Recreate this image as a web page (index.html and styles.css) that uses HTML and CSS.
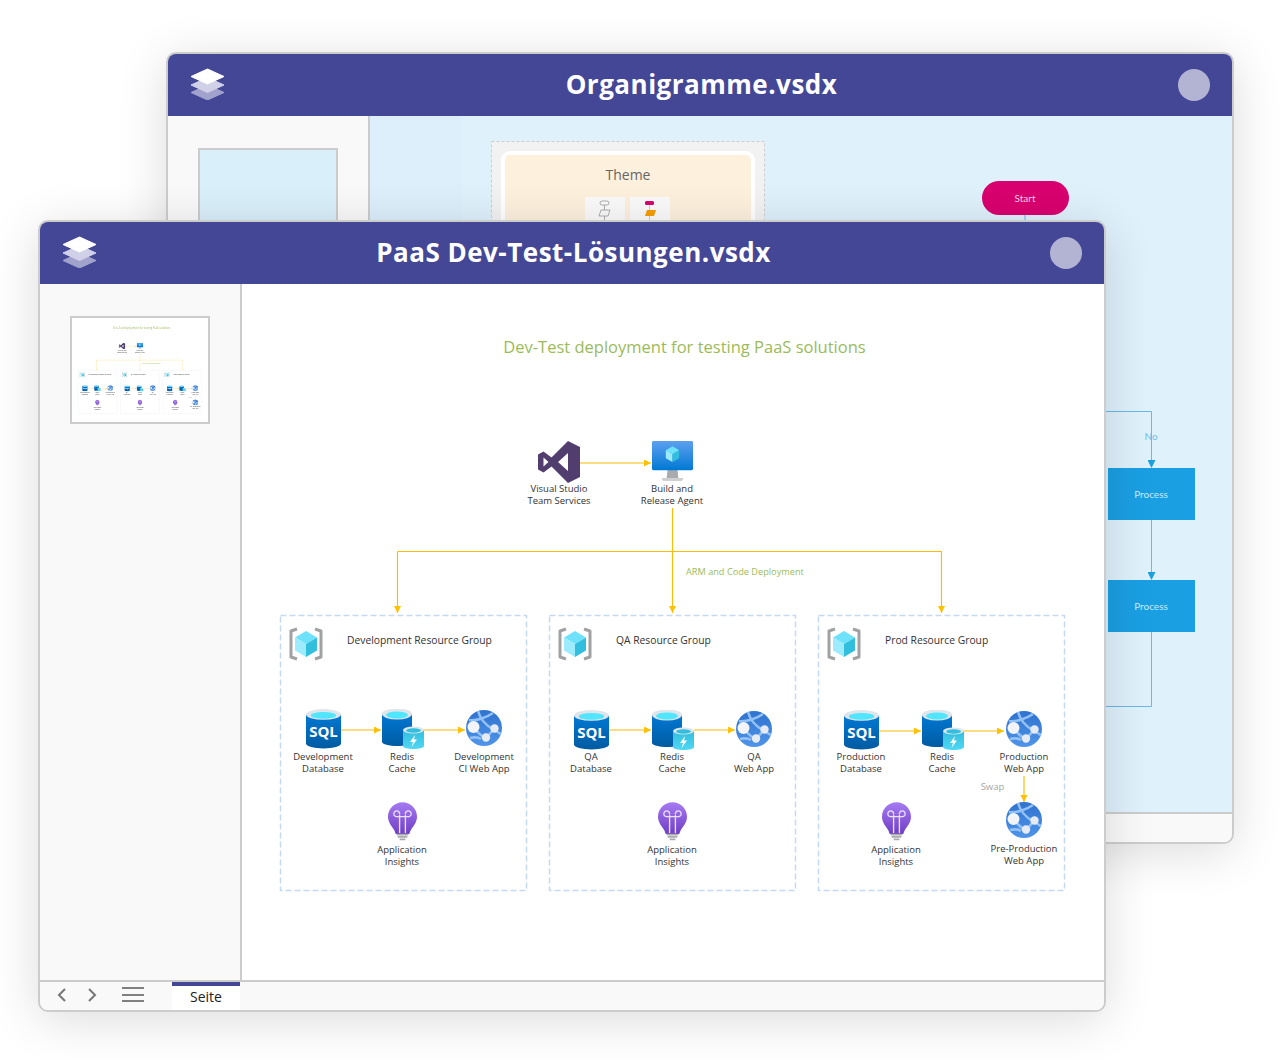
FILE: index.html
```html
<!DOCTYPE html>
<html lang="en">
<head>
    <meta charset="UTF-8">
    <meta name="viewport" content="width=device-width, initial-scale=1.0">
    <link rel="stylesheet" href="styles.css">
    <title>Viewer</title>
</head>
<body>
    <!-- shared icons -->
    <svg class="icon-defs" aria-hidden="true">
        <defs>
            <linearGradient id="gradMonitor" x1="0" y1="0" x2="0" y2="1">
                <stop offset="0" stop-color="#5ea0ef"/>
                <stop offset="1" stop-color="#0078d4"/>
            </linearGradient>
            <linearGradient id="gradDb" x1="0" y1="0" x2="0" y2="1">
                <stop offset="0" stop-color="#0078d4"/>
                <stop offset="1" stop-color="#005ba1"/>
            </linearGradient>
            <linearGradient id="gradCache" x1="0" y1="0" x2="0" y2="1">
                <stop offset="0" stop-color="#32bedd"/>
                <stop offset="1" stop-color="#50d8f5"/>
            </linearGradient>
            <linearGradient id="gradWeb" x1="0" y1="0" x2="0" y2="1">
                <stop offset="0" stop-color="#2f72cf"/>
                <stop offset="1" stop-color="#4f95ea"/>
            </linearGradient>
            <linearGradient id="gradBulb" x1="0" y1="0" x2="0" y2="1">
                <stop offset="0" stop-color="#a67af4"/>
                <stop offset="1" stop-color="#6f3fc4"/>
            </linearGradient>
            <marker id="arrowGold" markerWidth="8" markerHeight="8" refX="7" refY="3.5" orient="auto" markerUnits="userSpaceOnUse">
                <path d="M0 0L7 3.5L0 7Z" fill="#ffc000"/>
            </marker>
            <marker id="arrowBlue" markerWidth="8" markerHeight="8" refX="7" refY="4" orient="auto" markerUnits="userSpaceOnUse">
                <path d="M0 0L8 4L0 8Z" fill="#1a9fe3"/>
            </marker>
        </defs>
        <symbol id="iconLayers" viewBox="0 0 35 32">
            <path d="M17.500 17L34 24.500L17.500 32L1 24.500Z" fill="#a2a3cc" stroke="#a2a3cc" stroke-linejoin="round"/>
            <path d="M17.500 9.500L34 17L17.500 24.500L1 17Z" fill="#d0d1e8" stroke="#d0d1e8" stroke-linejoin="round"/>
            <path d="M17.500 1L34 8.500L17.500 16L1 8.500Z" fill="#fff" stroke="#fff" stroke-linejoin="round"/>
        </symbol>
        <symbol id="iconCube" viewBox="0 0 24 26">
            <path d="M12 0L23 6.500L12 13L1 6.500Z" fill="#6fe2fb"/>
            <path d="M1 6.500L12 13V26L1 19.500Z" fill="#9cebff"/>
            <path d="M23 6.500L12 13V26L23 19.500Z" fill="#32bedd"/>
        </symbol>
        <symbol id="iconVs" viewBox="0 0 42 42">
            <path fill-rule="evenodd" fill="#523e6e" d="M30 0L42 6V36L30 42L13.500 25.500L5.500 31.500L0 28.500V13.500L5.500 10.500L13.500 16.500ZM30 12L20 21L30 30ZM5.500 16.500V25.500L10.500 21Z"/>
        </symbol>
        <symbol id="iconMonitor" viewBox="0 0 42 42">
            <path d="M16 29H26L27 38H15Z" fill="#a9abae"/>
            <path d="M10 38H32C32 40 31 41 30 41H12C11 41 10 40 10 38Z" fill="#cfd0d2"/>
            <rect width="42" height="30" rx="1.500" fill="url(#gradMonitor)"/>
            <use href="#iconCube" x="13.500" y="5" width="15" height="17"/>
        </symbol>
        <symbol id="iconGroup" viewBox="0 0 34 34">
            <path d="M8 2L2 4V30L8 32M26 2L32 4V30L26 32" fill="none" stroke="#a0a1a2" stroke-width="3" stroke-linejoin="round"/>
            <use href="#iconCube" x="5" y="3" width="24" height="28"/>
        </symbol>
        <symbol id="iconDb" viewBox="0 0 36 40">
            <path d="M0 5V35C0 38 8 40 18 40S36 38 36 35V5Z" fill="url(#gradDb)"/>
            <ellipse cx="18" cy="5" rx="18" ry="5.500" fill="#dfe5ea"/>
            <ellipse cx="18" cy="6" rx="13" ry="3.500" fill="#50e6ff"/>
        </symbol>
        <symbol id="iconRedis" viewBox="0 0 42 40">
            <path d="M0 5V33C0 35 7 37 15 37S30 35 30 33V5Z" fill="url(#gradDb)"/>
            <ellipse cx="15" cy="5" rx="15" ry="5.500" fill="#dfe5ea"/>
            <ellipse cx="15" cy="6" rx="11" ry="3.500" fill="#50e6ff"/>
            <path d="M21 21V37C21 39 26 40 31.500 40S42 39 42 37V21Z" fill="url(#gradCache)"/>
            <ellipse cx="31.500" cy="21" rx="10.500" ry="3.500" fill="#dfe5ea"/>
            <ellipse cx="31.500" cy="21.500" rx="7.500" ry="2.200" fill="#32bedd"/>
            <path d="M33 26L28 33H31L29.500 38L35 30.500H32Z" fill="#fff"/>
        </symbol>
        <symbol id="iconWeb" viewBox="0 0 36 36">
            <circle cx="18" cy="18" r="18" fill="url(#gradWeb)"/>
            <path d="M3 10C10 11 20 8 27 3M12 1C14 8 19 15 27 19C30 21 33 23 35 24M8 18C13 24 17 27 20 28M28 19C25 22 23 25 20 28M4 28C8 27 12 27 15 29" fill="none" stroke="#93c1f4" stroke-width="2.600"/>
            <circle cx="7.500" cy="17" r="6" fill="#f2f4f7"/>
            <circle cx="28.500" cy="18.500" r="4.200" fill="#e6ebf2"/>
            <circle cx="20" cy="27.500" r="4.200" fill="#e6ebf2"/>
        </symbol>
        <symbol id="iconBulb" viewBox="0 0 30 40">
            <path d="M15 0C6.700 0 0 6.700 0 15C0 21 4 25 6.500 29C7.500 31 8 33 8 33H22C22 33 22.500 31 23.500 29C26 25 30 21 30 15C30 6.700 23.300 0 15 0Z" fill="url(#gradBulb)"/>
            <path d="M12 32V13M18 32V13M12 12.500A3 3 0 1 0 9.500 15H20.500A3 3 0 1 0 18 12.500" fill="none" stroke="#eadffc" stroke-width="1.400"/>
            <path d="M9 33.500H21M10 36H20M12 38.500H18" stroke="#a9abae" stroke-width="1.800"/>
        </symbol>
    </svg>

    <!-- window in the back -->
    <section class="window window-back">
        <header class="titlebar">
            <svg class="logo"><use href="#iconLayers"/></svg>
            <h1 class="doc-title">Organigramme.vsdx</h1>
            <span class="user-dot"></span>
        </header>
        <div class="window-body">
            <aside class="sidebar">
                <div class="page-thumb page-thumb-blue"></div>
            </aside>
            <div class="canvas canvas-blue">
                <svg class="drawing" viewBox="370 116 862 696">
                    <rect x="491.500" y="141.500" width="273" height="110" fill="#f2f2f2" stroke="#cfcfcf" stroke-dasharray="3 2"/>
                    <rect x="503" y="153" width="250" height="100" rx="7" fill="#fdf0dd" stroke="#fff" stroke-width="4"/>
                    <text class="theme-label" x="628" y="180">Theme</text>
                    <rect x="585" y="197" width="40" height="40" fill="#fafafa"/>
                    <rect x="630" y="197" width="40" height="40" fill="#fafafa"/>
                    <g fill="none" stroke="#9a9a9a" stroke-width=".8">
                        <rect x="600" y="201" width="9" height="4" rx="2"/>
                        <path d="M601 210H610L608 216H599ZM604.500 205V210M604.500 216V222"/>
                    </g>
                    <rect x="645" y="201" width="9" height="4" rx="1.500" fill="#d9006f"/>
                    <path d="M647 210H656L654 216H645Z" fill="#f59c00"/>
                    <path d="M649.500 205V210M649.500 216V222" stroke="#9ccbe6" stroke-width=".8"/>

                    <g fill="none" stroke="#6ab8e6">
                        <path d="M1025 215V240"/>
                        <path d="M1090 411.500H1151.500V467" marker-end="url(#arrowBlue)"/>
                        <path d="M1151.500 520V579" marker-end="url(#arrowBlue)"/>
                        <path d="M1151.500 632V706.500H1090"/>
                    </g>
                    <rect x="982" y="181" width="87" height="34" rx="17" fill="#d9006f"/>
                    <text class="flow-label flow-label-start" x="1025" y="202">Start</text>
                    <rect x="1108" y="468" width="87" height="52" fill="#1a9fe3"/>
                    <text class="flow-label" x="1151" y="497.500">Process</text>
                    <rect x="1108" y="580" width="87" height="52" fill="#1a9fe3"/>
                    <text class="flow-label" x="1151" y="609.500">Process</text>
                    <text class="flow-no" x="1151" y="439.500">No</text>
                </svg>
            </div>
        </div>
        <footer class="footer"></footer>
    </section>

    <!-- window in the front -->
    <section class="window window-front">
        <header class="titlebar">
            <svg class="logo"><use href="#iconLayers"/></svg>
            <h1 class="doc-title">PaaS Dev-Test-Lösungen.vsdx</h1>
            <span class="user-dot"></span>
        </header>
        <div class="window-body">
            <aside class="sidebar">
                <div class="page-thumb">
                    <svg class="thumb-drawing" viewBox="242 284 862 660"><use href="#diagram"/></svg>
                </div>
            </aside>
            <div class="canvas">
                <svg class="drawing" viewBox="242 284 862 696">
                    <g id="diagram">
                        <text class="diagram-title" x="684.500" y="353">Dev-Test deployment for testing PaaS solutions</text>

                        <!-- connectors -->
                        <g class="link">
                            <path d="M580 463H651" marker-end="url(#arrowGold)"/>
                            <path d="M672.500 508V613" marker-end="url(#arrowGold)"/>
                            <path d="M397.500 551.500H941.500V613" marker-end="url(#arrowGold)"/>
                            <path d="M397.500 551.500V613" marker-end="url(#arrowGold)"/>
                            <path d="M341 730H381" marker-end="url(#arrowGold)"/>
                            <path d="M424 730H465" marker-end="url(#arrowGold)"/>
                            <path d="M609 730H651" marker-end="url(#arrowGold)"/>
                            <path d="M694 730H735" marker-end="url(#arrowGold)"/>
                            <path d="M879 731H921" marker-end="url(#arrowGold)"/>
                            <path d="M963 731H1004" marker-end="url(#arrowGold)"/>
                            <path d="M1024 776V802" marker-end="url(#arrowGold)"/>
                        </g>
                        <text class="link-label" x="686" y="574.500">ARM and Code Deployment</text>
                        <text class="swap-label" x="992.500" y="790">Swap</text>

                        <use href="#iconVs" x="538" y="441" width="42" height="42"/>
                        <text class="node-label" x="559" y="492">Visual Studio<tspan x="559" dy="12">Team Services</tspan></text>
                        <use href="#iconMonitor" x="652" y="441" width="41" height="41"/>
                        <text class="node-label" x="672" y="492">Build and<tspan x="672" dy="12">Release Agent</tspan></text>

                        <!-- development group -->
                        <rect class="group-box" x="280.500" y="615.500" width="246" height="275"/>
                        <use href="#iconGroup" x="289" y="627" width="34" height="34"/>
                        <text class="group-label" x="347" y="643.500">Development Resource Group</text>
                        <use href="#iconDb" x="306" y="709" width="35" height="40"/>
                        <text class="sql-label" x="323.500" y="736.500">SQL</text>
                        <text class="node-label" x="323" y="759.500">Development<tspan x="323" dy="12">Database</tspan></text>
                        <use href="#iconRedis" x="382" y="709" width="42" height="40"/>
                        <text class="node-label" x="402" y="759.500">Redis<tspan x="402" dy="12">Cache</tspan></text>
                        <use href="#iconWeb" x="466" y="710" width="36" height="36"/>
                        <text class="node-label" x="484" y="759.500">Development<tspan x="484" dy="12">CI Web App</tspan></text>
                        <use href="#iconBulb" x="388" y="802" width="29" height="39"/>
                        <text class="node-label" x="402" y="852.500">Application<tspan x="402" dy="12.500">Insights</tspan></text>

                        <!-- qa group -->
                        <rect class="group-box" x="549.500" y="615.500" width="246" height="275"/>
                        <use href="#iconGroup" x="558" y="627" width="34" height="34"/>
                        <text class="group-label" x="616" y="643.500">QA Resource Group</text>
                        <use href="#iconDb" x="574" y="710" width="35" height="40"/>
                        <text class="sql-label" x="591.500" y="737.500">SQL</text>
                        <text class="node-label" x="591" y="760">QA<tspan x="591" dy="12">Database</tspan></text>
                        <use href="#iconRedis" x="652" y="710" width="42" height="40"/>
                        <text class="node-label" x="672" y="760">Redis<tspan x="672" dy="12">Cache</tspan></text>
                        <use href="#iconWeb" x="736" y="711" width="36" height="36"/>
                        <text class="node-label" x="754" y="760">QA<tspan x="754" dy="12">Web App</tspan></text>
                        <use href="#iconBulb" x="658" y="802" width="29" height="39"/>
                        <text class="node-label" x="672" y="852.500">Application<tspan x="672" dy="12.500">Insights</tspan></text>

                        <!-- prod group -->
                        <rect class="group-box" x="818.500" y="615.500" width="246" height="275"/>
                        <use href="#iconGroup" x="827" y="627" width="34" height="34"/>
                        <text class="group-label" x="885" y="643.500">Prod Resource Group</text>
                        <use href="#iconDb" x="844" y="710" width="35" height="40"/>
                        <text class="sql-label" x="861.500" y="737.500">SQL</text>
                        <text class="node-label" x="861" y="760">Production<tspan x="861" dy="12">Database</tspan></text>
                        <use href="#iconRedis" x="922" y="710" width="42" height="40"/>
                        <text class="node-label" x="942" y="760">Redis<tspan x="942" dy="12">Cache</tspan></text>
                        <use href="#iconWeb" x="1006" y="711" width="36" height="36"/>
                        <text class="node-label" x="1024" y="760">Production<tspan x="1024" dy="12">Web App</tspan></text>
                        <use href="#iconBulb" x="882" y="802" width="29" height="39"/>
                        <text class="node-label" x="896" y="852.500">Application<tspan x="896" dy="12.500">Insights</tspan></text>
                        <use href="#iconWeb" x="1006" y="802" width="36" height="36"/>
                        <text class="node-label" x="1024" y="851.500">Pre-Production<tspan x="1024" dy="12.500">Web App</tspan></text>
                    </g>
                </svg>
            </div>
        </div>
        <footer class="footer">
            <div class="pager">
                <svg class="pager-icon" viewBox="0 0 10 14"><path d="M8 1L2 7L8 13"/></svg>
                <svg class="pager-icon" viewBox="0 0 10 14"><path d="M2 1L8 7L2 13"/></svg>
            </div>
            <div class="menu-lines"><span></span><span></span><span></span></div>
            <div class="page-tab">Seite</div>
        </footer>
    </section>
</body>
</html>
```

FILE: styles.css
```css
body {
    margin: 0;
    padding: 0;
    width: 1280px;
    height: 1060px;
    overflow: hidden;
    background-color: #fff;
    font-family: "Open Sans", sans-serif;
}

.icon-defs {
    position: absolute;
    width: 0;
    height: 0;
}

/* windows sit on a free desktop */
.window {
    position: absolute;
    box-sizing: border-box;
    width: 1068px;
    height: 792px;
    display: flex;
    flex-direction: column;
    overflow: hidden;
    background-color: #f9f9f9;
    border: 2px solid #ccc;
    border-radius: 10px;
    box-shadow: 0 8px 50px rgba(0, 0, 0, 0.14);
}

.window-back {
    left: 166px;
    top: 52px;
}

.window-front {
    left: 38px;
    top: 220px;
}

.titlebar {
    flex: none;
    height: 62px;
    padding: 0 22px;
    display: flex;
    align-items: center;
    justify-content: space-between;
    background-color: #444796;
}

.logo {
    width: 35px;
    height: 32px;
    margin-bottom: 3px;
}

.doc-title {
    margin: 0 0 2px;
    color: #fff;
    font-size: 26px;
    font-weight: 700;
    letter-spacing: 0.5px;
}

.user-dot {
    width: 32px;
    height: 32px;
    border-radius: 50%;
    background-color: #b3b3d3;
}

.window-body {
    flex: 1;
    min-height: 0;
    display: flex;
}

.sidebar {
    flex: none;
    box-sizing: border-box;
    width: 202px;
    padding: 32px 30px 0;
    background-color: #f9f9f9;
    border-right: 2px solid #ccc;
}

.page-thumb {
    box-sizing: border-box;
    width: 140px;
    height: 108px;
    background-color: #fff;
    border: 2px solid #ccc;
}

.page-thumb-blue {
    background-color: #d9eff9;
}

.thumb-drawing {
    display: block;
    width: 100%;
    height: 100%;
    filter: blur(0.4px);
}

.canvas {
    flex: 1;
    min-width: 0;
    background-color: #fff;
}

.canvas-blue {
    background: linear-gradient(90deg, #dceffa 0, #dceffa 92px, #dff1fb 92px, #dff1fb 100%);
}

.drawing {
    display: block;
    width: 100%;
    height: 100%;
}

.footer {
    flex: none;
    box-sizing: border-box;
    height: 30px;
    display: flex;
    align-items: flex-start;
    background-color: #f9f9f9;
    border-top: 2px solid #ccc;
}

.pager {
    display: flex;
    gap: 20px;
    margin: 6px 0 0 17px;
}

.pager-icon {
    width: 10px;
    height: 14px;
    fill: none;
    stroke: #777;
    stroke-width: 2;
}

.menu-lines {
    display: flex;
    flex-direction: column;
    gap: 4.5px;
    width: 22px;
    margin: 5px 0 0 25px;
}

.menu-lines span {
    height: 2px;
    background-color: #808080;
}

.page-tab {
    box-sizing: border-box;
    width: 68px;
    height: 28px;
    margin-left: 28px;
    text-align: center;
    background-color: #fff;
    border-top: 4px solid #444796;
    color: #222;
    font-size: 14px;
    font-weight: 500;
    line-height: 22px;
}

/* diagram text and strokes */
.diagram-title {
    fill: #9bbb59;
    font-size: 16.5px;
    text-anchor: middle;
}

.node-label {
    fill: #333;
    font-size: 9.5px;
    text-anchor: middle;
}

.group-label {
    fill: #333;
    font-size: 10.3px;
}

.sql-label {
    fill: #fff;
    font-size: 15px;
    font-weight: 700;
    text-anchor: middle;
}

.link {
    fill: none;
    stroke: #fcbc0a;
    stroke-width: 1.2;
}

.link-label {
    fill: #9bbb59;
    font-size: 9.2px;
}

.swap-label {
    fill: #a6a6a6;
    font-size: 9.5px;
    text-anchor: middle;
}

.group-box {
    fill: none;
    stroke: #c5d9f1;
    stroke-width: 1.5;
    stroke-dasharray: 6 3;
}

.theme-label {
    fill: #666;
    font-size: 14px;
    text-anchor: middle;
}

.flow-label {
    fill: #c8ecff;
    font-family: Lato, sans-serif;
    font-size: 10px;
    text-anchor: middle;
}

.flow-label-start {
    fill: #fbd0e4;
}

.flow-no {
    fill: #6fbfe8;
    font-family: Lato, sans-serif;
    font-size: 10px;
    text-anchor: middle;
}
```
